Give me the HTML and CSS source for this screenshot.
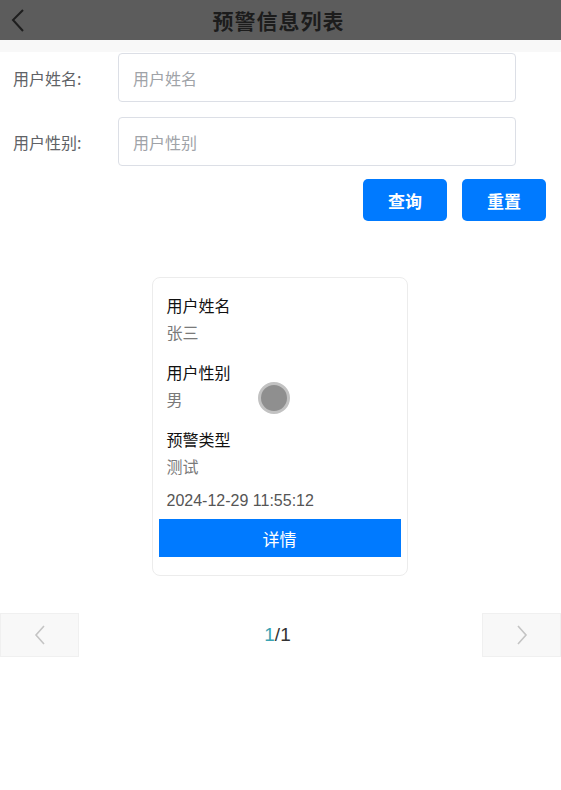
FILE: index.html
```html
<!DOCTYPE html>
<html lang="zh">
<head>
<meta charset="utf-8">
<link rel="stylesheet" href="styles.css">
</head>
<body>
<header class="nav">
  <svg class="back" width="16" height="26" viewBox="0 0 16 26"><path d="M13 3 L3 13 L13 24" fill="none" stroke="#1e1e1e" stroke-width="2"/></svg>
  <h1 class="title">预警信息列表</h1>
</header>
<div class="band"></div>
<form class="search">
  <div class="row">
    <label class="lbl">用户姓名:</label>
    <div class="input">用户姓名</div>
  </div>
  <div class="row">
    <label class="lbl">用户性别:</label>
    <div class="input">用户性别</div>
  </div>
  <div class="actions">
    <span class="btn">查询</span>
    <span class="btn">重置</span>
  </div>
</form>
<section class="list">
  <div class="card">
    <div class="k">用户姓名</div>
    <div class="v">张三</div>
    <div class="k">用户性别</div>
    <div class="v">男</div>
    <div class="k">预警类型</div>
    <div class="v">测试</div>
    <div class="time">2024-12-29 11:55:12</div>
    <div class="detail">详情</div>
    <span class="touch"></span>
  </div>
</section>
<nav class="pager">
  <div class="pbtn"><svg width="14" height="22" viewBox="0 0 14 22"><path d="M11 2 L3 11 L11 20" fill="none" stroke="#c4c4c4" stroke-width="1.6"/></svg></div>
  <div class="pnum"><span class="cur">1</span>/1</div>
  <div class="pbtn"><svg width="14" height="22" viewBox="0 0 14 22"><path d="M3 2 L11 11 L3 20" fill="none" stroke="#c4c4c4" stroke-width="1.6"/></svg></div>
</nav>
</body>
</html>
```
FILE: styles.css
```css
* { box-sizing: border-box; }
body {
  margin: 0;
  font-family: "Noto Sans CJK SC", "Liberation Sans", sans-serif;
  background: #fff;
  width: 561px;
}
.nav {
  height: 40px;
  background: #5c5c5c;
  display: flex;
  align-items: center;
  justify-content: center;
  position: relative;
}
.back { position: absolute; left: 10px; top: 7px; }
.title {
  margin: 0 0 0 -4px;
  font-size: 21px;
  font-weight: 700;
  color: #1c1c1c;
  line-height: 40px;
  letter-spacing: 1px;
}
.band { height: 12px; background: #f8f8f8; }
.search { padding: 1px 15px 0 13px; }
.row {
  display: flex;
  align-items: center;
  margin-bottom: 15px;
}
.lbl {
  width: 105px;
  font-size: 16px;
  color: #606266;
}
.input {
  flex: 1;
  height: 49px;
  border: 1px solid #dcdfe6;
  border-radius: 4px;
  padding-left: 14px;
  font-size: 16px;
  color: #a0a3a8;
  display: flex;
  align-items: center;
  margin-right: 30px;
}
.actions {
  display: flex;
  justify-content: flex-end;
  gap: 15px;
  margin-top: -2px;
}
.btn {
  width: 84px;
  height: 42px;
  background: #007aff;
  color: #fff;
  border-radius: 5px;
  font-size: 17px;
  font-weight: 700;
  display: flex;
  align-items: center;
  justify-content: center;
}
.list {
  display: flex;
  justify-content: center;
  padding: 56px 0 37px;
  margin-left: -2px;
}
.card {
  position: relative;
  width: 256px;
  border: 1px solid #ececec;
  border-radius: 8px;
  padding: 14px 6px 18px 6px;
}
.k {
  padding-left: 8px;
  font-size: 16px;
  color: #111;
  line-height: 27px;
}
.v {
  padding-left: 8px;
  font-size: 16px;
  color: #7a7a7a;
  line-height: 26px;
  margin-bottom: 14px;
}
.time {
  padding-left: 8px;
  margin-top: -4px;
  font-family: "Liberation Sans", sans-serif;
  font-size: 16px;
  color: #555;
  line-height: 24px;
  margin-bottom: 6px;
}
.detail {
  height: 38px;
  background: #007aff;
  color: #fff;
  font-size: 17px;
  display: flex;
  align-items: center;
  justify-content: center;
}
.touch {
  position: absolute;
  left: 105px;
  top: 104px;
  width: 32px;
  height: 32px;
  border-radius: 50%;
  background: #8f8f8f;
  border: 3px solid #c2c2c2;
}
.pager {
  display: flex;
  align-items: center;
  justify-content: space-between;
  height: 44px;
}
.pbtn {
  width: 79px;
  height: 44px;
  background: #f8f8f8;
  border: 1px solid #f0f0f0;
  display: flex;
  align-items: center;
  justify-content: center;
}
.pnum {
  font-family: "Liberation Sans", sans-serif;
  font-size: 19px;
  color: #333;
  margin-left: -6px;
}
.cur { color: #3aa3b3; }
```
